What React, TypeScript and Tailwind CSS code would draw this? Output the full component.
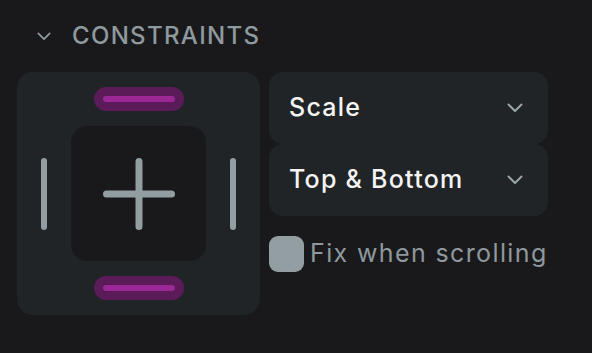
function Chevron({ className }: { className?: string }) {
  return (
    <svg className={className} width="16" height="10" viewBox="0 0 16 10" fill="none">
      <path d="M1.5 1.5L8 8L14.5 1.5" stroke="currentColor" strokeWidth="2" strokeLinecap="round" strokeLinejoin="round" />
    </svg>
  );
}

function Pill() {
  return (
    <div className="flex h-[24px] w-[90px] items-center justify-center rounded-full bg-[#5b1b58]">
      <div className="h-[6px] w-[72px] rounded-full bg-[#9b2895]" />
    </div>
  );
}

function Bar() {
  return <div className="h-[72px] w-[6px] rounded-full bg-[#939ea3]" />;
}

function Select({ label }: { label: string }) {
  return (
    <div className="flex h-[72px] items-center justify-between rounded-[14px] bg-[#212426] pl-[20px] pr-[25px]">
      <span className="text-[25px] font-medium tracking-[0.05em] text-[#f4f4f4]">{label}</span>
      <Chevron className="text-[#9aa5aa]" />
    </div>
  );
}

export default function App() {
  return (
    <div
      className="h-[353px] w-[592px] bg-[#19191b] pl-[17px] pt-[16px]"
      style={{ fontFamily: 'Inter, "Noto Sans", sans-serif' }}
    >
      <div className="flex h-10 items-center">
        <Chevron className="ml-[20px] h-[9px] w-[14px] text-[#8f9a9f]" />
        <span className="ml-[21px] text-[24px] font-medium tracking-[0.055em] text-[#8f9a9f]">
          CONSTRAINTS
        </span>
      </div>

      <div className="mt-4 flex gap-[9px]">
        <div className="flex h-[243px] w-[243px] flex-col items-center justify-between rounded-[16px] bg-[#212426] py-[15px]">
          <Pill />
          <div className="flex w-full items-center justify-between px-[24px]">
            <Bar />
            <div className="flex h-[135px] w-[135px] items-center justify-center rounded-[16px] bg-[#19191b]">
              <svg width="72" height="72" viewBox="0 0 72 72" fill="none">
                <path d="M3.5 36H68.5M36 3.5V68.5" stroke="#939ea3" strokeWidth="7" strokeLinecap="round" />
              </svg>
            </div>
            <Bar />
          </div>
          <Pill />
        </div>

        <div className="flex w-[279px] flex-col">
          <Select label="Scale" />
          <Select label="Top & Bottom" />
          <label className="mt-[19px] flex items-center gap-[6px] whitespace-nowrap">
            <span className="h-[36px] w-[35px] shrink-0 rounded-[9px] bg-[#939ea3]" />
            <span className="text-[25px] tracking-[0.055em] text-[#8e989d]">Fix when scrolling</span>
          </label>
        </div>
      </div>
    </div>
  );
}
